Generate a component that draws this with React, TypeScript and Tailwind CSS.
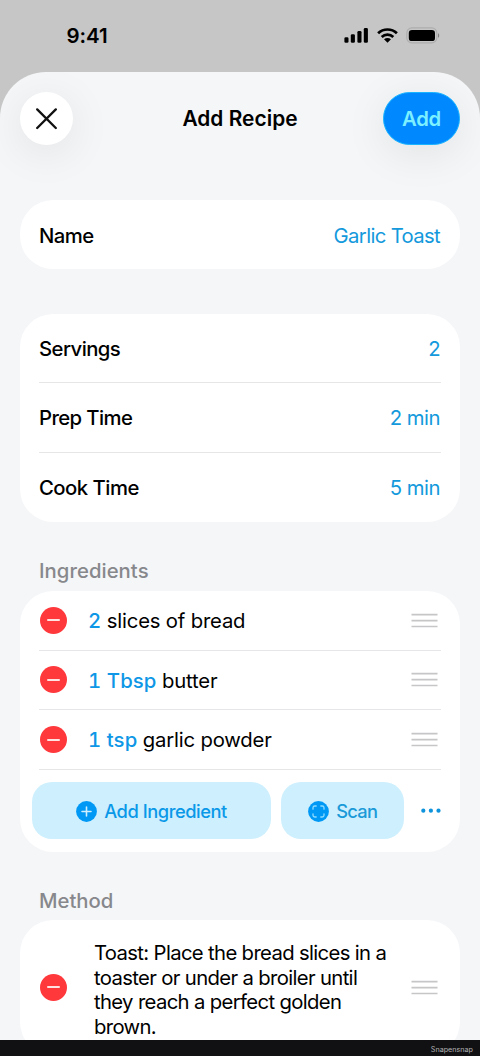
import type { ReactNode } from "react";

const detalles = [
  { id: 1, label: "Servings", value: "2", labelClass: "tracking-[-0.55px]" },
  { id: 2, label: "Prep Time", value: "2 min", labelClass: "tracking-[-0.6px]" },
  { id: 3, label: "Cook Time", value: "5 min", labelClass: "tracking-[-0.5px]" },
];

const ingredients = [
  { id: 1, amount: "2", name: "slices of bread" },
  { id: 2, amount: "1 Tbsp", name: "butter" },
  { id: 3, amount: "1 tsp", name: "garlic powder" },
];

const steps = [
  { id: 1, lines: ["Toast: Place the bread slices in a", "toaster or under a broiler until", "they reach a perfect golden", "brown."] },
];

function StatusBar() {
  return (
    <div className="h-[72px] shrink-0 flex items-start justify-between pl-[66.5px] pr-10 pt-[22px]">
      <p className="text-[20.5px] leading-7 font-semibold tracking-[-0.05px]">9:41</p>
      <div className="flex items-center pt-[5px]">
        <svg className="w-6 h-[17px]" viewBox="0 0 24 17">
          <rect x="0.4" y="10.2" width="4.1" height="5.6" rx="1.3" />
          <rect x="6.8" y="7.2" width="4.1" height="8.6" rx="1.3" />
          <rect x="13.4" y="4" width="4.1" height="11.8" rx="1.3" />
          <rect x="19.8" y="1" width="4.1" height="14.8" rx="1.3" />
        </svg>
        <svg className="w-[21px] h-[17px] ml-[9px]" viewBox="0 0 21 17">
          <g fill="none" stroke="#000" strokeWidth="2.7">
            <path d="M1.1 6.3C6.4 1.2 14.6 1.2 19.9 6.3" />
            <path d="M4.7 9.9C8 6.8 13 6.8 16.3 9.9" />
          </g>
          <path d="M7 12.2C9 10.5 12 10.5 14 12.2L10.5 15.8Z" />
        </svg>
        <svg className="w-[34px] h-[17px] ml-[8px]" viewBox="0 0 34 17">
          <rect x="0.8" y="0.9" width="30" height="15" rx="5" fill="none" stroke="#000" strokeOpacity="0.13" strokeWidth="1.1" />
          <rect x="2.8" y="2.9" width="26.2" height="11.2" rx="3.2" />
          <path d="M32 6.2C33.6 6.8 33.6 10.2 32 10.8Z" fillOpacity="0.35" />
        </svg>
      </div>
    </div>
  );
}

function Card({ children, className = "" }: { children: ReactNode; className?: string }) {
  return <div className={`mx-5 bg-white rounded-[33px] ${className}`}>{children}</div>;
}

function DeleteButton() {
  return (
    <button className="w-[27px] h-[27px] shrink-0 rounded-full bg-[#ff383c] flex items-center justify-center cursor-pointer">
      <span className="w-[13px] h-[2px] rounded-full bg-[#ffe3e3]" />
    </button>
  );
}

function DragHandle() {
  return (
    <svg className="w-[27px] h-[15px] shrink-0" viewBox="0 0 27 15" stroke="#c6c6c8" strokeWidth="1.6">
      <path d="M0.5 1.6H26.5M0.5 7.6H26.5M0.5 13.5H26.5" />
    </svg>
  );
}

export default function App() {
  return (
    <div className="w-[480px] h-[1056px] overflow-hidden flex flex-col bg-[#c5c6c5] text-black text-[20.3px] font-['Inter',sans-serif]">
      <StatusBar />

      <div className="h-[967.5px] shrink-0 overflow-hidden bg-[#f5f6f8] rounded-t-[46px] flex flex-col">
        <div className="h-[128px] shrink-0 flex items-start justify-between px-5 pt-5">
          <div className="w-[77px]">
            <button className="w-[53px] h-[53px] rounded-full bg-white shadow-[0_8px_44px_rgba(0,0,0,0.085)] flex items-center justify-center cursor-pointer">
              <svg className="w-[22px] h-[22px]" viewBox="0 0 22 22" stroke="#111" strokeWidth="2.3" strokeLinecap="round">
                <path d="M1.2 1.4L19.8 20M19.8 1.4L1.2 20" />
              </svg>
            </button>
          </div>
          <p className="pt-[13px] text-[20.9px] leading-7 font-semibold tracking-[0.02px]">Add Recipe</p>
          <button className="w-[77px] h-[53px] pt-px rounded-full bg-[#0088ff] border border-[#19b4ff] text-[#7df0ff] font-semibold tracking-[-0.2px] shadow-[0_8px_44px_rgba(0,0,0,0.085)] cursor-pointer">
            Add
          </button>
        </div>

        <Card className="h-[69px] shrink-0 pl-[19px] pr-5 pt-[3px] flex items-center justify-between">
          <span className="font-[450] tracking-[-0.5px]">Name</span>
          <span className="text-[#1399dc] tracking-[-0.65px]">Garlic Toast</span>
        </Card>

        <Card className="mt-[45px] shrink-0 px-[19px]">
          {detalles.map((item) => (
            <div key={item.id} className="h-[69.3px] pt-[2.5px] pr-px flex items-center justify-between border-b border-[#e6e6e8] last:border-b-0">
              <span className={`font-[450] ${item.labelClass}`}>{item.label}</span>
              <span className="text-[#1399dc] tracking-[-0.5px]">{item.value}</span>
            </div>
          ))}
        </Card>

        <h2 className="mt-[35px] mb-[6px] px-[39px] leading-7 font-[550] text-[#87888c] tracking-[0.05px]">Ingredients</h2>
        <Card className="h-[261px] shrink-0">
          {ingredients.map((item) => (
            <div key={item.id} className="mx-[19px] h-[59.7px] flex items-center border-b border-[#e6e6e8] pl-[1px] pr-[3px]">
              <DeleteButton />
              <p className="ml-[21px] pt-[2px] flex-1 tracking-[-0.18px]">
                <span className="font-medium text-[#0e97e6] tabular-nums tracking-[0.1px]">{item.amount}</span> {item.name}
              </p>
              <DragHandle />
            </div>
          ))}
          <div className="pt-[12.5px] pl-3 flex items-center">
            <button className="w-[238.5px] h-[57px] pt-px rounded-[20px] bg-[#cdeffe] text-[#0a98e8] text-[18.3px] font-medium tracking-[-0.45px] flex items-center justify-center cursor-pointer">
              <svg className="w-[21px] h-[21px] mr-[7.5px]" viewBox="0 0 21 21">
                <circle cx="10.5" cy="10.5" r="10.4" fill="#0098f5" />
                <path d="M6 10.5H15M10.5 6V15" stroke="#cdeffe" strokeWidth="1.6" strokeLinecap="round" />
              </svg>
              Add Ingredient
            </button>
            <button className="w-[123px] h-[57px] pt-px ml-[10.5px] rounded-[20px] bg-[#cdeffe] text-[#1a9ad8] text-[18.3px] font-medium tracking-[-0.7px] flex items-center justify-center cursor-pointer">
              <svg className="w-[21px] h-[21px] mr-[7.5px]" viewBox="0 0 21 21">
                <circle cx="10.5" cy="10.5" r="10.4" fill="#0098f5" />
                <path
                  d="M8.2 5H6.8A1.8 1.8 0 0 0 5 6.8V8.2M12.8 5H14.2A1.8 1.8 0 0 1 16 6.8V8.2M16 12.8V14.2A1.8 1.8 0 0 1 14.2 16H12.8M8.2 16H6.8A1.8 1.8 0 0 1 5 14.2V12.8"
                  fill="none"
                  stroke="#8fdcff"
                  strokeWidth="1.3"
                  strokeLinecap="round"
                />
              </svg>
              Scan
            </button>
            <svg className="w-5 h-[5px] ml-[17px]" viewBox="0 0 20 5" fill="#0e93dc">
              <circle cx="2.3" cy="2.7" r="2.1" />
              <circle cx="9.9" cy="2.7" r="2.1" />
              <circle cx="17.5" cy="2.7" r="2.1" />
            </svg>
          </div>
        </Card>

        <h2 className="mt-[35px] mb-[5px] px-[39px] leading-7 font-[550] text-[#87888c] tracking-[0px]">Method</h2>
        <Card className="shrink-0">
          {steps.map((step) => (
            <div key={step.id} className="h-[135px] pl-5 pr-[22px] flex items-center">
              <DeleteButton />
              <div className="ml-[27px] flex-1 pt-[6px] whitespace-nowrap leading-[24.8px] tracking-[-0.65px]">
                {step.lines.map((line) => (
                  <p key={line}>{line}</p>
                ))}
              </div>
              <DragHandle />
            </div>
          ))}
        </Card>
      </div>

      <div className="flex-1 bg-[#111113] flex items-center justify-end pt-[3px] pr-[7px]">
        <span className="text-[7.2px] leading-none text-[#b4b4b6] font-['Inter',sans-serif]">Snapensnap</span>
      </div>
    </div>
  );
}
